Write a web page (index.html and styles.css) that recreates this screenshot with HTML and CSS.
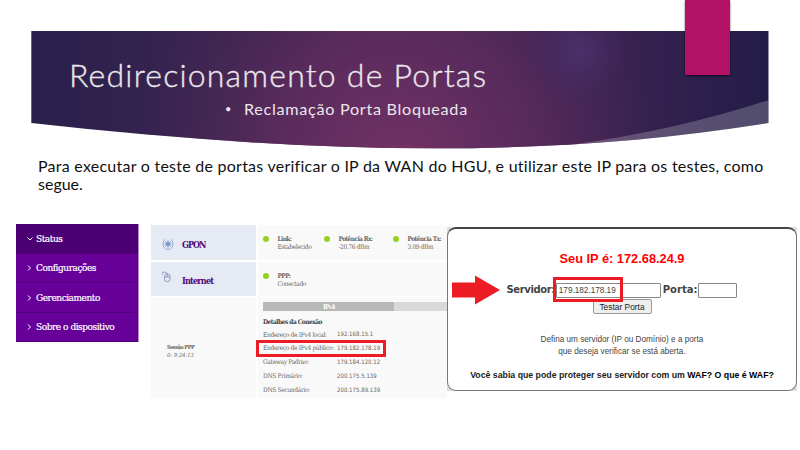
FILE: index.html
```html
<!DOCTYPE html>
<html lang="pt-BR">
<head>
<meta charset="utf-8">
<title>Redirecionamento de Portas</title>
<link rel="stylesheet" href="styles.css">
</head>
<body>
<main class="slide">
  <header class="banner">
    <svg class="banner-bg" viewBox="31 31 738 119" width="738" height="119" aria-hidden="true">
      <defs>
        <linearGradient id="base" x1="0" x2="1" y1="0" y2="0">
          <stop offset="0" stop-color="#28204b"/><stop offset=".45" stop-color="#4b2856"/>
          <stop offset=".72" stop-color="#402454"/><stop offset="1" stop-color="#231d47"/>
        </linearGradient>
        <radialGradient id="rose" gradientUnits="userSpaceOnUse" cx="400" cy="165" r="270">
          <stop offset="0" stop-color="#753266"/><stop offset=".5" stop-color="#5e2c5e" stop-opacity=".75"/>
          <stop offset="1" stop-color="#45274f" stop-opacity="0"/>
        </radialGradient>
        <radialGradient id="glow" gradientUnits="userSpaceOnUse" cx="578" cy="52" r="52">
          <stop offset="0" stop-color="#4c2f6b"/><stop offset="1" stop-color="#432a60" stop-opacity="0"/>
        </radialGradient>
        <clipPath id="curve"><path d="M31.3 31H768.5V123C522 163 277 150 31.3 123Z"/></clipPath>
      </defs>
      <g clip-path="url(#curve)">
        <path fill="url(#base)" d="M31 31h738v119H31z"/>
        <path fill="url(#rose)" d="M31 31h738v119H31z"/>
        <path fill="url(#glow)" d="M31 31h738v119H31z"/>
        <path fill="#fff" fill-opacity=".21" d="M570 145Q674 131 769 100V150H570Z"/>
      </g>
    </svg>
    <h1>Redirecionamento de Portas</h1>
    <p class="subtitle"><span class="bullet">•</span><span class="subtext">Reclamação Porta Bloqueada</span></p>
  </header>
  <div class="ribbon"></div>
  <p class="intro"><span class="line1">Para executar o teste de portas verificar o IP da WAN do HGU, e utilizar este IP para os testes, como</span><br>segue.</p>

  <section class="panels">
    <nav class="menu">
      <div class="item active"><svg viewBox="0 0 6 6"><path d="M.5 1.5 3 4 5.5 1.5"/></svg><span>Status</span></div>
      <div class="item"><svg viewBox="0 0 6 6"><path d="M1 .5 3.5 3 1 5.5"/></svg><span>Configurações</span></div>
      <div class="item"><svg viewBox="0 0 6 6"><path d="M1 .5 3.5 3 1 5.5"/></svg><span>Gerenciamento</span></div>
      <div class="item"><svg viewBox="0 0 6 6"><path d="M1 .5 3.5 3 1 5.5"/></svg><span>Sobre o dispositivo</span></div>
    </nav>

    <div class="router">
      <div class="label">
        <svg width="12" height="12" viewBox="0 0 12 12" fill="none" stroke="#7d9bcb"><path stroke-width=".8" d="M3 1.2Q-1 6 3 10.8M9 1.2Q13 6 9 10.8M4 11.3h4"/><circle cx="6" cy="6" r="2" fill="#7d9bcb"/><path stroke-width=".7" d="M6 1.8v8.4M1.8 6h8.4M3 3l6 6M9 3 3 9"/></svg>
        <b>GPON</b>
      </div>
      <div class="status">
        <div class="stat"><i></i><p><b>Link:</b><br>Estabelecido</p></div>
        <div class="stat"><i></i><p><b>Potência Rx:</b><br>-20.76 dBm</p></div>
        <div class="stat"><i></i><p><b>Potência Tx:</b><br>3.09 dBm</p></div>
      </div>
      <div class="label internet">
        <svg width="12" height="12" viewBox="0 0 12 12" fill="none" stroke="#8583b0" stroke-width=".8"><path d="M.5 3.5Q0 .8 2.5 1T5 3"/><rect x="2.5" y="3" width="5.5" height="7.6" rx="2.5"/><path d="M5.2 3v3M2.5 6H8"/></svg>
        <b>Internet</b>
      </div>
      <div class="status"><div class="stat"><i></i><p><b>PPP:</b><br>Conectado</p></div></div>
      <div class="session"><p><b>Sessão PPP</b><br><em>0: 9:24:13</em></p></div>
      <div class="details">
        <div class="tabs"><b>IPv4</b></div>
        <h2>Detalhes da Conexão</h2>
        <dl>
          <dt>Endereço de IPv4 local:</dt><dd>192.168.15.1</dd>
          <dt>Endereço de IPv4 público:</dt><dd>179.182.178.19</dd>
          <dt>Gateway Padrao:</dt><dd>179.184.120.12</dd>
          <dt>DNS Primário:</dt><dd>200.175.5.139</dd>
          <dt>DNS Secundário:</dt><dd>200.175.89.139</dd>
        </dl>
        <div class="mark mark-ip"></div>
      </div>
    </div>

    <div class="tester">
      <div class="card">
        <h3>Seu IP é: 172.68.24.9</h3>
        <div class="form"><b>Servidor:</b><span class="field server">179.182.178.19</span><b class="port-label">Porta:</b><span class="field port"></span></div>
        <div class="button">Testar Porta</div>
        <p class="help">Defina um servidor (IP ou Domínio) e a porta<br>que deseja verificar se está aberta.</p>
        <p class="waf">Você sabia que pode proteger seu servidor com um <span>WAF? O que é WAF?</span></p>
      </div>
      <svg class="arrow" width="50" height="32" viewBox="0 0 50 32"><path fill="#ed1c24" d="M1 8.5H24V1.5L49 16 24 30.5V23.5H1Z"/></svg>
      <div class="mark mark-server"></div>
    </div>
  </section>
</main>
</body>
</html>
```
FILE: styles.css
```css
* { box-sizing: border-box; }
body, h1, h2, h3, p, dl, dd { margin: 0; }
body { background: #fff; }
.slide {
  position: relative; width: 800px; height: 450px; padding-top: 31px; overflow: hidden;
  font-family: "Century Gothic", "URW Gothic", Lato, sans-serif;
}
.banner { position: relative; width: 738px; height: 119px; margin-left: 31px; padding: 25px 0 0 38px; color: #ebe6eb; }
.banner-bg { position: absolute; left: 0; top: 0; }
.banner h1 { position: relative; font-size: 32px; line-height: 38px; font-weight: 300; letter-spacing: 1.2px; white-space: nowrap; -webkit-text-stroke: .35px #ebe6eb; }
.subtitle { position: relative; display: flex; gap: 13px; margin: 5px 0 0 156px; font-size: 16.2px; line-height: 20px; white-space: nowrap; }
.bullet { width: 6px; font-size: 11px; }
.subtext { letter-spacing: .7px; }
.ribbon { position: absolute; left: 685px; top: 0; width: 45px; height: 75px; background: #b31166; box-shadow: 0 1px 2px #0009; }
.intro { height: 74px; padding: 7px 0 0 38px; font-size: 16px; line-height: 18px; color: #111; white-space: nowrap; }
.line1 { letter-spacing: .25px; }

.panels { display: flex; align-items: flex-start; padding-left: 16px; }
.menu { width: 123px; height: 118px; display: grid; grid-template-rows: repeat(4, 1fr); font: 10px/14px "DejaVu Serif Condensed", "DejaVu Serif", serif; letter-spacing: -.46px; color: #fff; background: #660099; border-right: 1px solid #b88bcb; }
.item { display: flex; align-items: center; gap: 3px; padding: 1px 0 0 11px; border-bottom: 1px solid #51007b; white-space: nowrap; }
.item svg { width: 6px; height: 6px; fill: none; stroke: #fff; stroke-width: 1; }
.item span { -webkit-text-stroke: .2px #fff; }
.active { background: #4d0074; }

.router { width: 296px; height: 173px; margin: 1px 0 0 12px; display: grid; grid-template-columns: 105px 189px; grid-template-rows: 35px 34px 101px; column-gap: 2px; row-gap: 1.5px; font-family: "DejaVu Serif Condensed", "DejaVu Serif", serif; color: #666; }
.label { display: flex; align-items: center; gap: 8px; padding: 3px 0 0 11px; background: #e6eaf4; color: #4b087b; font-size: 9px; letter-spacing: -1px; }
.internet { letter-spacing: -.8px; }
.internet svg { margin-top: -7px; }
.label b { padding-top: 2px; }
.status { position: relative; display: grid; grid-template-columns: 61px 69px 59px; padding: 10px 0 0 5px; background: #f9f9f9; }
.stat { display: flex; align-items: flex-start; gap: 8.5px; font-size: 6.5px; line-height: 8px; letter-spacing: -.35px; white-space: nowrap; }
.stat b { letter-spacing: -.58px; }
.stat i { width: 6px; height: 6px; margin-top: 1px; border-radius: 50%; background: #94d11f; flex: none; }
.session { background: #f9f9f9; padding: 47px 0 0 16px; font-size: 5.6px; line-height: 7.5px; letter-spacing: -.5px; }
.session em { letter-spacing: .1px; }
.details { position: relative; background: #f9f9f9; padding: 5px 0 0 5px; font-size: 6.5px; }
.tabs { height: 9px; width: 184px; background: linear-gradient(90deg, #b8b8b8 131px, #d9d9d9 131px); color: #fff; line-height: 10px; padding-left: 60px; letter-spacing: -.8px; border-radius: 1px 0 0 0; }
.details h2 { font-size: 6.5px; line-height: 9px; margin-top: 7px; color: #444; letter-spacing: -.5px; }
.details dl { display: grid; grid-template-columns: 74px 1fr; grid-auto-rows: 13.9px; line-height: 14px; white-space: nowrap; }
.details dt { letter-spacing: -.29px; padding-top: .5px; }
.details dd { font: 6px/14px "DejaVu Sans Condensed", "DejaVu Sans", sans-serif; letter-spacing: .02px; }
.mark { position: absolute; border: 3px solid #ed1c24; }
.mark-ip { left: -2px; top: 43px; width: 130px; height: 17px; }

.tester { position: relative; width: 350px; height: 164px; margin-top: 3px; background: #ddd; }
.card { height: 164px; border: 1px solid #777; border-top: 2px solid #444; border-radius: 9px; background: #fff; display: flex; flex-direction: column; align-items: center; font-family: "Liberation Sans", Arial, sans-serif; color: #444; white-space: nowrap; }
.card h3 { margin-top: 22px; font-size: 12.8px; line-height: 16px; color: #f00; }
.form { display: flex; align-items: center; height: 16px; margin-top: 15px; font: 10px/16px "DejaVu Sans", sans-serif; letter-spacing: -.4px; }
.field { height: 15px; border: 1px solid #888; border-radius: 1px; background: #fff; font: 8.2px/14px "Liberation Sans", Arial, sans-serif; letter-spacing: 0; padding-left: 2px; }
.server { width: 105px; margin-left: 1px; }
.port-label { margin-left: 2px; letter-spacing: 0; }
.port { width: 39px; margin-left: 1px; }
.button { width: 59px; height: 15px; margin-top: 1px; border: 1px solid #999; border-radius: 2px; background: #eee; font-size: 8.4px; line-height: 14px; text-align: center; color: #222; }
.help { margin-top: 20px; font-size: 8.2px; line-height: 12px; text-align: center; }
.waf { margin-top: 11px; font-size: 8.75px; line-height: 12px; font-weight: bold; color: #222; }
.waf span { color: #000; }
.arrow { position: absolute; left: 4px; top: 47px; }
.mark-server { left: 106px; top: 50px; width: 70px; height: 25px; }
```
